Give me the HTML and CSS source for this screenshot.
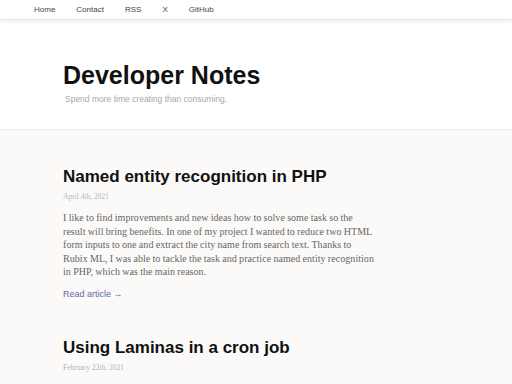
FILE: index.html
```html
<!DOCTYPE html>
<html lang="en">
<head>
  <meta charset="UTF-8" />
  <title>Developer Notes</title>
  <link rel="stylesheet" href="styles.css">
</head>
<body>

<nav class="topnav">
  <a href="#">Home</a>
  <a href="#">Contact</a>
  <a href="#">RSS</a>
  <a href="#">X</a>
  <a href="#">GitHub</a>
</nav>

<header class="site-header">
  <h1>Developer Notes</h1>
  <p class="tagline">Spend more time creating than consuming.</p>
</header>

<main>
  <article class="post">
    <h2>Named entity recognition in PHP</h2>
    <div class="post-date">April 4th, 2021</div>
    <p>I like to find improvements and new ideas how to solve some task so the result will bring benefits. In one of my project I wanted to reduce two HTML form inputs to one and extract the city name from search text. Thanks to Rubix ML, I was able to tackle the task and practice named entity recognition in PHP, which was the main reason.</p>
    <a href="#" class="read-more">Read article &rarr;</a>
  </article>

  <article class="post">
    <h2>Using Laminas in a cron job</h2>
    <div class="post-date">February 22th, 2021</div>
  </article>
</main>

</body>
</html>
```

FILE: styles.css
```css
body {
  margin: 0;
  background: #fbfaf8;
  color: #111;
  font-family: "Liberation Sans", Arial, sans-serif;
}
.topnav {
  background: #fff;
  height: 19px;
  display: flex;
  align-items: center;
  padding-left: 34px;
  box-shadow: 0 2px 4px rgba(0, 0, 0, 0.07);
  border-bottom: 1px solid #e8e8e8;
  position: relative;
}
.topnav a {
  color: #444;
  text-decoration: none;
  font-size: 8px;
  margin-right: 21px;
}
.site-header {
  background: #fff;
  padding: 40px 63px 25px;
  border-bottom: 1px solid #eeece8;
}
.site-header h1 {
  margin: 0;
  font-size: 25px;
  font-weight: 700;
  line-height: 30px;
  color: #111;
}
.tagline {
  margin: 4px 0 0 2px;
  font-size: 8.5px;
  color: #a8a8a8;
}
main {
  padding: 36px 63px 0;
  max-width: 311px;
}
.post {
  margin-bottom: 37px;
}
.post h2 {
  margin: 0;
  font-size: 17px;
  font-weight: 700;
  line-height: 22px;
  color: #111;
}
.post-date {
  font-family: "Liberation Serif", serif;
  font-size: 7.5px;
  line-height: 10px;
  color: #b5b5b5;
  margin-top: 4px;
}
.post p {
  font-family: "Liberation Serif", serif;
  font-size: 10px;
  line-height: 13.6px;
  color: #666;
  margin: 9px 0 10px;
  word-spacing: -0.3px;
  letter-spacing: 0.05px;
}
.read-more {
  display: block;
  font-size: 9px;
  line-height: 11px;
  color: #5e6aab;
  text-decoration: none;
}
```
